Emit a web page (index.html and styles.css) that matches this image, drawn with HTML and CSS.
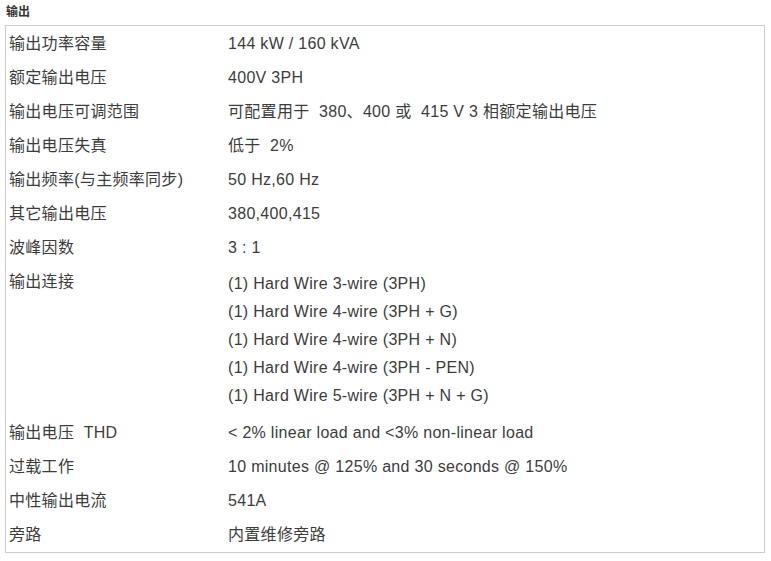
FILE: index.html
```html
<!DOCTYPE html>
<html>
<head>
<meta charset="utf-8">
<link rel="stylesheet" href="styles.css">
</head>
<body>
<div class="title">输出</div>
<div class="spec">
  <div class="row"><div class="label">输出功率容量</div><div class="value">144 kW / 160 kVA</div></div>
  <div class="row"><div class="label">额定输出电压</div><div class="value">400V 3PH</div></div>
  <div class="row"><div class="label">输出电压可调范围</div><div class="value">可配置用于&nbsp; 380、400 或&nbsp; 415 V 3 相额定输出电压</div></div>
  <div class="row"><div class="label">输出电压失真</div><div class="value">低于&nbsp; 2%</div></div>
  <div class="row"><div class="label">输出频率(与主频率同步)</div><div class="value">50 Hz,60 Hz</div></div>
  <div class="row"><div class="label">其它输出电压</div><div class="value">380,400,415</div></div>
  <div class="row"><div class="label">波峰因数</div><div class="value">3 : 1</div></div>
  <div class="row"><div class="label">输出连接</div><div class="value list">
    <div>(1) Hard Wire 3-wire (3PH)</div>
    <div>(1) Hard Wire 4-wire (3PH + G)</div>
    <div>(1) Hard Wire 4-wire (3PH + N)</div>
    <div>(1) Hard Wire 4-wire (3PH - PEN)</div>
    <div>(1) Hard Wire 5-wire (3PH + N + G)</div>
  </div></div>
  <div class="row"><div class="label">输出电压&nbsp; THD</div><div class="value">&lt; 2% linear load and &lt;3% non-linear load</div></div>
  <div class="row"><div class="label">过载工作</div><div class="value">10 minutes @ 125% and 30 seconds @ 150%</div></div>
  <div class="row"><div class="label">中性输出电流</div><div class="value">541A</div></div>
  <div class="row"><div class="label">旁路</div><div class="value">内置维修旁路</div></div>
</div>
</body>
</html>
```
FILE: styles.css
```css
html, body { margin: 0; padding: 0; background: #fff; }
body {
  font-family: "Liberation Sans", Arial, "Noto Sans CJK SC", sans-serif;
  color: #3c3c3c;
}
.title {
  font-size: 12px;
  font-weight: bold;
  line-height: 14px;
  padding: 4px 0 0 6px;
  height: 21px;
  box-sizing: border-box;
  font-family: "Noto Sans CJK SC", sans-serif;
  color: #333;
}
.spec {
  margin-left: 5px;
  width: 760px;
  box-sizing: border-box;
  border: 1px solid #ccc;
  margin-top: 4px;
  padding-top: 1px;
}
.row {
  display: grid;
  grid-template-columns: 222px 1fr;
  font-size: 16px;
  line-height: 34px;
  letter-spacing: 0.3px;
}
.label { padding-left: 3px; }
.list { padding: 5px 0 6px; line-height: 28px; }
```
